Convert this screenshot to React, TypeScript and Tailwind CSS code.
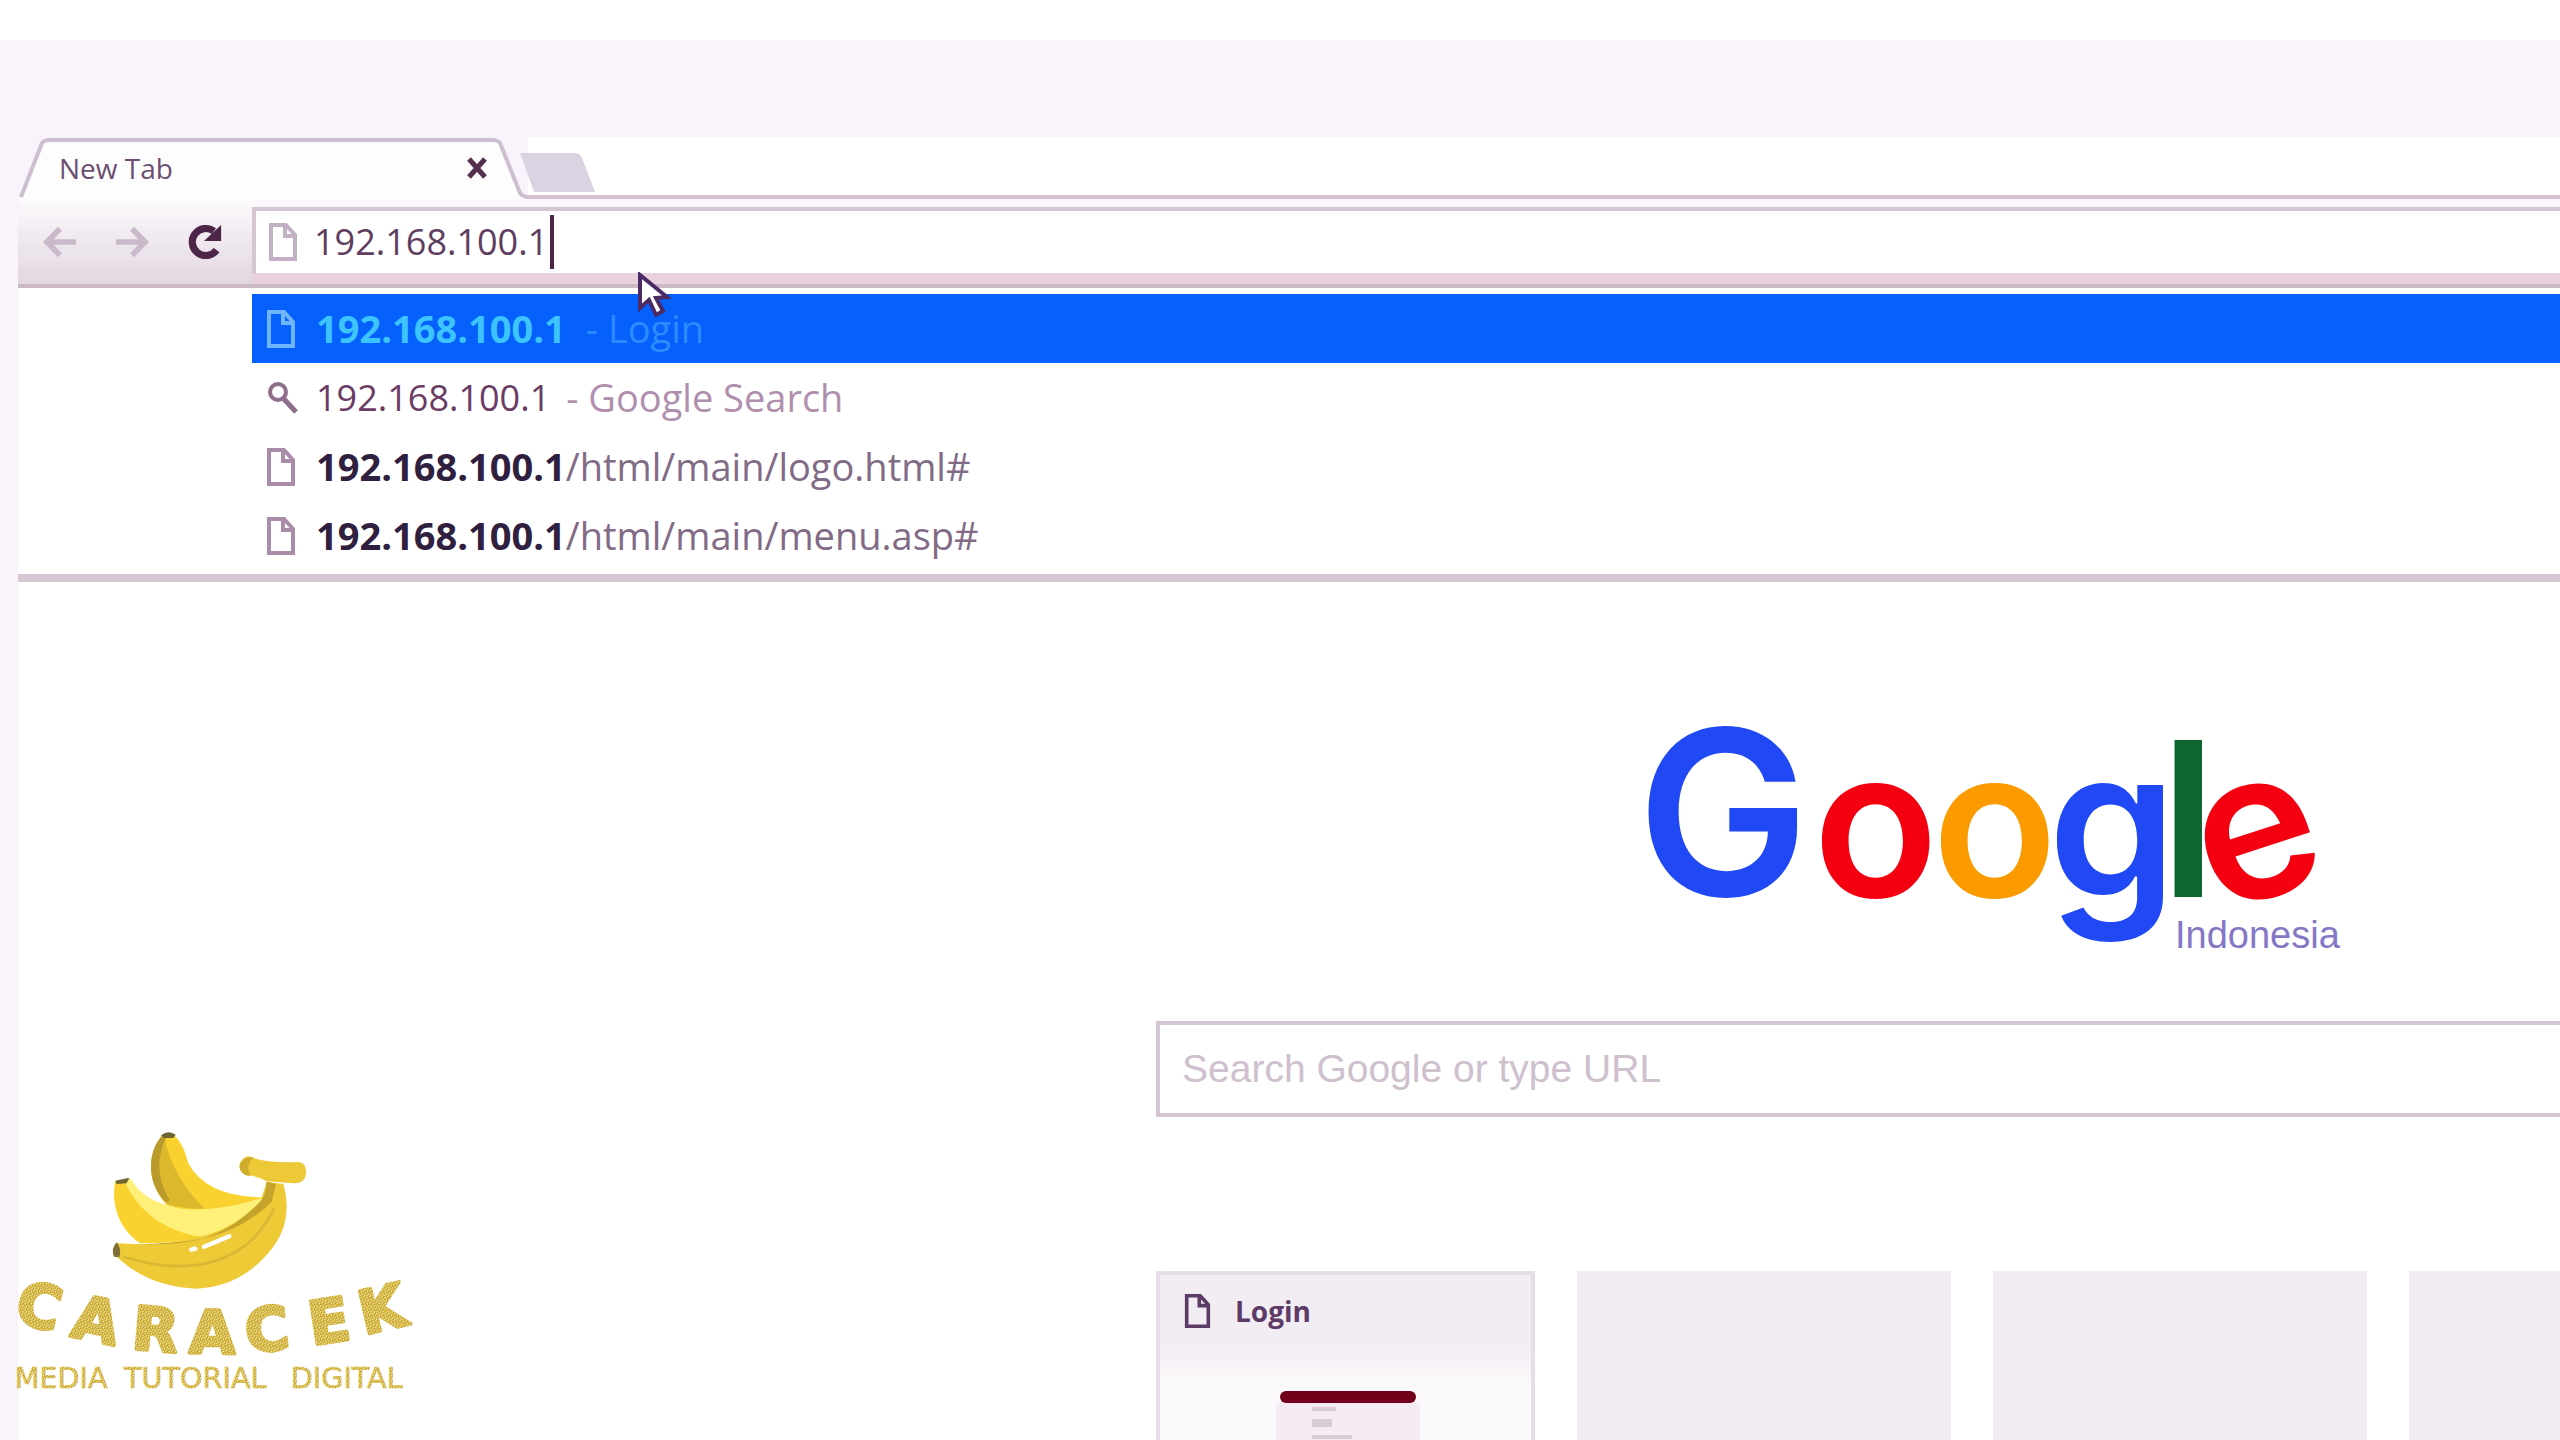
import type { SVGProps } from 'react';

function PageIcon(props: SVGProps<SVGSVGElement>) {
  return (
    <svg viewBox="0 0 30 40" fill="none" stroke="currentColor" strokeWidth="4" aria-hidden="true" {...props}>
      <path d="M3 3H18L27 13V37H3Z" />
      <path d="M17 3V14H27" />
    </svg>
  );
}

function SearchIcon() {
  return (
    <svg viewBox="0 0 34 36" className="h-9 w-[34px]" fill="none" stroke="#8d6f8c" aria-hidden="true">
      <circle cx="12" cy="12" r="8" strokeWidth="4" />
      <path d="M17 18L30 32" strokeWidth="5" />
    </svg>
  );
}

function Tab() {
  return (
    <div className="relative flex h-[62px] w-[510px] shrink-0 items-center justify-between pr-10 pl-[41px]">
      <svg viewBox="0 0 510 62" className="absolute inset-0 h-full w-full" fill="none" aria-hidden="true">
        <path d="M3 60L24 6Q26 3 32 3H474Q480 3 482 6L502 56Q505 60 510 60V62H0Z" fill="#fefdfe" />
        <path d="M3 60L24 6Q26 3 32 3H474Q480 3 482 6L502 56Q505 60 510 60" stroke="#cdbfcf" strokeWidth="4" />
      </svg>
      <span className="relative font-['Open_Sans'] text-[28px] text-[#6b4f70]">New Tab</span>
      <button type="button" aria-label="Close tab" className="relative">
        <svg viewBox="0 0 22 22" className="size-[22px]" stroke="#54304f" strokeWidth="5" aria-hidden="true">
          <path d="M3 2L19 20M19 2L3 20" />
        </svg>
      </button>
    </div>
  );
}

function Toolbar() {
  return (
    <div className="flex h-[89px] border-b-4 border-[#cbb9c5] bg-linear-to-b from-[#fcfafc] to-[#e2d6e1]">
      <div className="flex w-[234px] shrink-0 items-center gap-9 pl-6">
        <button type="button" aria-label="Back">
          <svg viewBox="0 0 38 34" className="h-8 w-9" fill="none" stroke="#c9b9cb" strokeWidth="6" aria-hidden="true">
            <path d="M19 3L5 17L19 31M6 17H36" />
          </svg>
        </button>
        <button type="button" aria-label="Forward">
          <svg viewBox="0 0 38 34" className="h-8 w-9" fill="none" stroke="#c9b9cb" strokeWidth="6" aria-hidden="true">
            <path d="M19 3L33 17L19 31M32 17H2" />
          </svg>
        </button>
        <button type="button" aria-label="Reload">
          <svg viewBox="0 0 40 40" className="size-9" fill="none" aria-hidden="true">
            <path d="M31 8A15 15 0 1 0 34 29" stroke="#4d2549" strokeWidth="8" />
            <path d="M39 1V19H20Z" fill="#4d2549" />
          </svg>
        </button>
      </div>
      <div className="flex min-w-0 grow flex-col pt-2">
        <label className="flex h-[66px] items-center gap-4 border-t-4 border-l-4 border-[#d4c6d2] bg-white pl-3">
          <PageIcon className="h-10 w-[30px] text-[#c4b0c4]" />
          <span className="relative flex grow items-center">
            <input
              aria-label="Address"
              defaultValue="192.168.100.1"
              className="w-full bg-transparent font-['Open_Sans'] text-[36px] leading-[56px] text-[#5f3d60] outline-none"
            />
            <span className="absolute left-[236px] h-[54px] w-1 bg-[#4d2549]" />
          </span>
        </label>
        <div className="grow bg-[#ead1e0]" />
      </div>
    </div>
  );
}

function Suggestions() {
  return (
    <ul className="border-b-[8px] border-[#d6c7d5] bg-white pt-[6px] pb-1 pl-[234px] font-['Open_Sans'] text-[38px] leading-[69px]">
      <li>
        <a href="#login" className="flex items-center gap-5 bg-[#0660fb] pl-[14px] text-[#2b8cff]">
          <PageIcon className="h-10 w-[30px] text-[#6fb4ff]" />
          <b className="text-[#3cc4ff]">192.168.100.1</b>
          <span>- Login</span>
        </a>
      </li>
      <li>
        <a href="#search" className="flex items-center gap-4 pl-[14px] text-[#b08fae]">
          <SearchIcon />
          <span className="text-[36px] text-[#6a3c64]">192.168.100.1</span>
          <span>- Google Search</span>
        </a>
      </li>
      <li>
        <a href="#logo" className="flex items-center gap-5 pl-[14px] text-[#826b86]">
          <PageIcon className="h-10 w-[30px] text-[#a98ca8]" />
          <span><b className="text-[#30203f]">192.168.100.1</b>/html/main/logo.html#</span>
        </a>
      </li>
      <li>
        <a href="#menu" className="flex items-center gap-5 pl-[14px] text-[#826b86]">
          <PageIcon className="h-10 w-[30px] text-[#a98ca8]" />
          <span><b className="text-[#30203f]">192.168.100.1</b>/html/main/menu.asp#</span>
        </a>
      </li>
    </ul>
  );
}

function GoogleLogo() {
  return (
    <svg viewBox="-20 -60 740 320" className="ml-[465px] h-[320px] w-[740px]" role="img" aria-label="Google Indonesia">
      <g fontFamily="Inter, sans-serif" fontWeight="600" fontSize="206">
        <text x="-4" y="182" fill="#2049f5" fontSize="230">G</text>
        <text x="172" y="183" fill="#f50010">o</text>
        <text x="291" y="183" fill="#fb9b00">o</text>
        <text x="407" y="183" fill="#2049f5">g</text>
        <text x="519" y="183" fill="#0d6530" fontSize="216">l</text>
        <text x="556" y="184" fill="#f50010" transform="rotate(-18 616 128)">e</text>
      </g>
      <text x="534" y="234" fill="#8577c6" fontFamily="Liberation Sans, sans-serif" fontSize="38">Indonesia</text>
    </svg>
  );
}

function Tiles() {
  return (
    <div className="flex min-h-40 grow gap-[42px] overflow-hidden">
      <a href="#login" className="flex w-[379px] shrink-0 flex-col border-x-4 border-t-4 border-[#e6dde8] bg-[#f2ecf3]">
        <span className="flex h-[72px] items-center gap-6 pl-6 font-['Open_Sans'] text-[28px] font-bold text-[#5c3b66]">
          <PageIcon className="h-9 w-[27px]" />
          Login
        </span>
        <span className="flex grow flex-col items-center bg-linear-to-b from-[#f2ecf3] to-[#fbf9fb] to-40% pt-[44px] pl-1">
          <span className="h-3 w-[136px] rounded-md bg-[#72001a]" />
          <span className="flex w-[144px] grow flex-col gap-2 bg-[#f4ebf3] pt-1 pl-9">
            <span className="h-1 w-6 bg-[#d9ccd9]" />
            <span className="h-2 w-5 bg-[#d9ccd9]" />
            <span className="h-1 w-10 bg-[#d9ccd9]" />
          </span>
        </span>
      </a>
      <div className="w-[374px] shrink-0 bg-[#f2ecf3]" />
      <div className="w-[374px] shrink-0 bg-[#f2ecf3]" />
      <div className="w-[374px] shrink-0 bg-[#f2ecf3]" />
    </div>
  );
}

function Pointer() {
  return (
    <svg viewBox="0 0 34 46" className="absolute top-[272px] left-[637px] h-[46px] w-[34px]" aria-hidden="true">
      <path d="M3 3V36L12 28L19 43L26 39L19 26L30 25Z" fill="#fff" stroke="#4b2a66" strokeWidth="4" />
    </svg>
  );
}

const letters: [string, number, number, number][] = [
  ['C', 38, 634, 14],
  ['A', 208, 678, 12],
  ['R', 392, 716, 5],
  ['A', 566, 729, 1],
  ['C', 742, 728, -6],
  ['E', 936, 706, -9],
  ['K', 1092, 674, -13],
];

function Watermark() {
  return (
    <svg viewBox="0 0 1320 900" className="absolute bottom-[30px] left-0 h-[300px] w-[440px]" role="img" aria-label="Caracek Media Tutorial Digital">
      <defs>
        <pattern id="glitter" width="18" height="18" patternUnits="userSpaceOnUse">
          <rect width="18" height="18" fill="#d2b13a" />
          <path d="M2 3h4v4h-4zM10 1h4v4h-4zM6 10h4v4h-4zM14 8h3v4h-3zM12 14h4v3h-4zM1 14h4v3h-4z" fill="#f3e7a8" />
          <path d="M6 5h3v3h-3zM14 3h3v3h-3zM9 13h3v3h-3z" fill="#b8962a" />
        </pattern>
      </defs>
      <path d="M485 78Q505 66 525 78Q550 100 565 160Q620 262 790 262L640 320L500 285C440 220 440 130 485 78Z" fill="#fad22f" />
      <path d="M492 82C440 130 445 230 505 285L625 305Q525 220 492 82Z" fill="#dcb82c" />
      <path d="M485 78C440 130 440 225 500 278L510 270C470 210 470 140 498 84Z" fill="#b99a2a" />
      <path d="M345 215L390 208C440 290 560 330 790 262L800 300Q700 400 420 400C350 350 335 280 345 215Z" fill="#fad22f" />
      <path d="M375 215L392 206C440 290 570 335 795 260Q740 350 610 380C500 370 410 300 375 215Z" fill="#fff07a" />
      <path d="M350 400Q640 420 780 280L800 215L850 222Q880 330 820 410Q730 530 590 536Q440 530 345 435Z" fill="#eecb36" />
      <path d="M410 402C580 412 720 370 815 275L828 222L800 215Q798 250 785 270Q700 360 600 388Q520 402 410 402Z" fill="#c6a42b" />
      <path d="M370 440C560 500 740 470 822 295" fill="none" stroke="#d9b633" strokeWidth="8" />
      <path d="M745 138Q790 160 895 156Q920 158 918 190Q915 222 880 220L800 214Q770 196 740 196Q715 180 720 160Q728 142 745 138Z" fill="#edc937" />
      <path d="M762 142Q735 165 752 198Q720 195 718 170Q724 140 762 142Z" fill="#cfac2c" />
      <path d="M483 76Q505 58 527 74L520 84H492Z" fill="#6d6432" />
      <path d="M346 212L388 203L380 220L350 222Z" fill="#6d6432" />
      <path d="M350 397Q366 415 358 442L342 440Q332 415 350 397Z" fill="#7f6f38" />
      <path d="M612 410L688 379M574 419L586 416" stroke="#fff" strokeWidth="13" strokeLinecap="round" />
      <g fill="url(#glitter)" stroke="url(#glitter)" fontFamily="DejaVu Sans, sans-serif">
        {letters.map(([glyph, x, y, angle]) => (
          <text key={x} x={x} y={y} rotate={angle} fontSize="180" fontWeight="700" strokeWidth="10" strokeLinejoin="round">{glyph}</text>
        ))}
        <g fontSize="86" strokeWidth="2">
          <text x="44" y="834">MEDIA</text>
          <text x="372" y="834">TUTORIAL</text>
          <text x="872" y="834">DIGITAL</text>
        </g>
      </g>
    </svg>
  );
}

export default function App() {
  return (
    <div className="relative flex min-h-screen flex-col overflow-hidden bg-[#f9f4fb]">
      <div className="h-10 bg-white" />
      <div className="flex grow flex-col pl-[18px]">
        <div className="mt-[97px] flex h-[62px]">
          <Tab />
          <div className="flex grow border-b-4 border-[#d2c2d2] bg-white">
            <button type="button" aria-label="New tab" className="-ml-2">
              <svg viewBox="0 0 80 52" className="h-[52px] w-20" aria-hidden="true">
                <path d="M0 13H54Q60 13 62 18L75 52H14Z" fill="#dbd3e2" />
              </svg>
            </button>
          </div>
        </div>
        <Toolbar />
        <Suggestions />
        <main className="flex grow flex-col bg-white pt-[72px]">
          <div className="flex grow flex-col pl-[1138px]">
            <GoogleLogo />
            <input
              aria-label="Search"
              placeholder="Search Google or type URL"
              className="mt-[47px] mb-[154px] block h-[96px] w-[1672px] border-4 border-[#d6c6d4] bg-white pl-[22px] font-['Liberation_Sans'] text-[39px] outline-none placeholder:text-[#cfc0ce]"
            />
            <Tiles />
          </div>
        </main>
      </div>
      <Pointer />
      <Watermark />
    </div>
  );
}
